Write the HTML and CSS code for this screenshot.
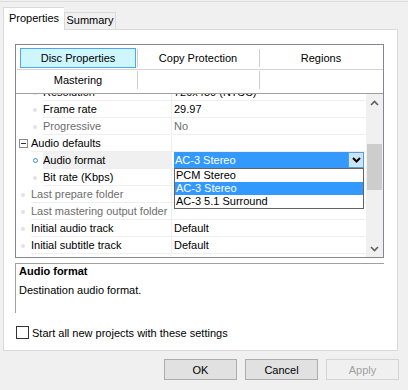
FILE: index.html
```html
<!DOCTYPE html>
<html lang="en">
<head>
    <meta charset="UTF-8">
    <title>Properties</title>
    <link rel="stylesheet" href="styles.css">
</head>
<body>
    <div class="window">
        <div class="tabs">
            <div class="tab active">Properties</div>
            <div class="tab">Summary</div>
        </div>

        <div class="page">
            <div class="grid">
                <div class="toolbar">
                    <div class="tb-row">
                        <div class="tb-cell"><span class="tb-btn pressed">Disc Properties</span></div>
                        <span class="tb-sep"></span>
                        <div class="tb-cell"><span class="tb-btn">Copy Protection</span></div>
                        <span class="tb-sep"></span>
                        <div class="tb-cell"><span class="tb-btn">Regions</span></div>
                    </div>
                    <div class="tb-line"></div>
                    <div class="tb-row">
                        <div class="tb-cell"><span class="tb-btn">Mastering</span></div>
                        <span class="tb-sep"></span>
                        <div class="tb-cell"></div>
                        <span class="tb-sep"></span>
                        <div class="tb-cell"></div>
                    </div>
                </div>

                <div class="grid-body">
                    <div class="rows">
                        <div class="row d2 first">
                            <span class="gutter"><i class="dot"></i></span>
                            <div class="cells"><span class="name">Resolution</span><span class="value">720x480 (NTSC)</span></div>
                        </div>
                        <div class="row d2">
                            <span class="gutter"><i class="dot"></i></span>
                            <div class="cells"><span class="name">Frame rate</span><span class="value">29.97</span></div>
                        </div>
                        <div class="row d2 disabled">
                            <span class="gutter"><i class="dot"></i></span>
                            <div class="cells"><span class="name">Progressive</span><span class="value">No</span></div>
                        </div>
                        <div class="row cat">
                            <span class="gutter"><i class="toggle"></i></span>
                            <div class="cells"><span class="name">Audio defaults</span><span class="value"></span></div>
                        </div>
                        <div class="row d2 selected">
                            <span class="gutter"><i class="dot ring"></i></span>
                            <div class="cells">
                                <span class="name">Audio format</span>
                                <span class="value">
                                    <span class="combo">
                                        <span class="combo-text">AC-3 Stereo</span>
                                        <span class="combo-btn">
                                            <svg width="9" height="6" viewBox="0 0 9 6"><path d="M1 1 L4.5 4.5 L8 1" fill="none" stroke="#000" stroke-width="2"/></svg>
                                        </span>
                                    </span>
                                    <span class="combo-list">
                                        <span class="opt">PCM Stereo</span>
                                        <span class="opt current">AC-3 Stereo</span>
                                        <span class="opt">AC-3 5.1 Surround</span>
                                    </span>
                                </span>
                            </div>
                        </div>
                        <div class="row d2">
                            <span class="gutter"><i class="dot"></i></span>
                            <div class="cells"><span class="name">Bit rate (Kbps)</span><span class="value"></span></div>
                        </div>
                        <div class="row d1 disabled">
                            <span class="gutter"><i class="dot"></i></span>
                            <div class="cells"><span class="name">Last prepare folder</span><span class="value"></span></div>
                        </div>
                        <div class="row d1 disabled">
                            <span class="gutter"><i class="dot"></i></span>
                            <div class="cells"><span class="name">Last mastering output folder</span><span class="value"></span></div>
                        </div>
                        <div class="row d1">
                            <span class="gutter"><i class="dot"></i></span>
                            <div class="cells"><span class="name">Initial audio track</span><span class="value">Default</span></div>
                        </div>
                        <div class="row d1">
                            <span class="gutter"><i class="dot"></i></span>
                            <div class="cells"><span class="name">Initial subtitle track</span><span class="value">Default</span></div>
                        </div>
                    </div>
                    <div class="scrollbar">
                        <span class="sb-arrow">
                            <svg width="9" height="6" viewBox="0 0 9 6"><path d="M1 5 L4.5 1.5 L8 5" fill="none" stroke="#606060" stroke-width="1.6"/></svg>
                        </span>
                        <span class="sb-track"><span class="sb-thumb"></span></span>
                        <span class="sb-arrow">
                            <svg width="9" height="6" viewBox="0 0 9 6"><path d="M1 1 L4.5 4.5 L8 1" fill="none" stroke="#606060" stroke-width="1.6"/></svg>
                        </span>
                    </div>
                </div>
            </div>

            <div class="desc">
                <div class="desc-title">Audio format</div>
                <div class="desc-text">Destination audio format.</div>
            </div>

            <label class="check"><span class="box"></span>Start all new projects with these settings</label>
        </div>

        <div class="buttons">
            <button class="btn">OK</button>
            <button class="btn">Cancel</button>
            <button class="btn" disabled>Apply</button>
        </div>
    </div>
</body>
</html>
```

FILE: styles.css
```css
body, html {
    margin: 0; padding: 0; width: 100%; height: 100%; overflow: hidden;
    background: #f0f0f0; color: #000;
    font-family: 'Liberation Sans', Arial, sans-serif; font-size: 11px;
}
.window {
    margin-top: 1px; border-top: 1px solid #dcdcdc;
    height: 388px; display: flex; flex-direction: column;
}

/* tabs */
.tabs {
    display: flex; align-items: flex-end; height: 27px; padding-left: 3px;
}
.tab {
    box-sizing: border-box; width: 52px; height: 17px; line-height: 15px; text-align: center;
    background: #f0f0f0; border: 1px solid #d9d9d9; border-bottom: none;
}
.tab.active {
    position: relative; z-index: 1; width: 61px; height: 23px; line-height: 21px;
    background: #fff; margin-bottom: -1px; border-right: none;
}
.page {
    box-sizing: border-box; height: 322px; margin: 0 10px 0 3px;
    background: #fff; border: 1px solid #d9d9d9;
    padding: 14px 13px 0 11px;
}

/* property grid */
.grid {
    border: 1px solid #828790; height: 212px; display: flex; flex-direction: column;
}
.toolbar {
    box-sizing: border-box; height: 49px; padding-top: 3px;
    border-bottom: 1px solid #a0a0a0;
}
.tb-row {
    display: grid; grid-template-columns: 117px 1px 121px 1px 1fr;
    align-items: center; height: 20px; padding-left: 4px;
}
.tb-cell { height: 20px; display: flex; }
.tb-btn {
    flex: 1; box-sizing: border-box; height: 20px; line-height: 18px; text-align: center;
    border: 1px solid transparent; margin-right: 1px;
}
.tb-btn.pressed { background: #cdf6ff; border-color: #4ea6f2; }
.tb-sep { height: 18px; background: #cfcfcf; }
.tb-line { height: 1px; background: #d4d4d4; margin: 1px 0 0 1px; }

.grid-body { flex: 1; display: flex; overflow: hidden; }
.rows { flex: 1; overflow: hidden; }
.row { display: flex; height: 17px; }
.row.first { margin-top: -10px; }
.gutter { flex: none; display: flex; align-items: center; width: 15px; }
.d2 .gutter { width: 27px; }
.dot {
    width: 4px; height: 4px; border-radius: 50%; background: #e2e2e2; margin-left: 5px;
}
.d2 .dot { margin-left: 17px; }
.dot.ring {
    box-sizing: border-box; width: 5px; height: 5px; background: none; border: 1px solid #3a8fe0;
}
.toggle {
    box-sizing: border-box; width: 9px; height: 9px; margin-left: 3px;
    border: 1px solid #8a8a8a; position: relative;
}
.toggle::after {
    content: ''; position: absolute; left: 1px; top: 3px; width: 5px; height: 1px; background: #333;
}
.cells { flex: 1; display: flex; border-bottom: 1px solid #efefef; }
.name {
    flex: 1; line-height: 16px; white-space: nowrap; overflow: hidden;
    border-right: 1px solid #efefef;
}
.value {
    width: 192px; flex: none; padding-left: 2px; line-height: 16px; white-space: nowrap;
    position: relative;
}
.disabled .name, .disabled .value { color: #6d6d6d; }
.selected .name { background: #f0f0f0; }

.combo {
    position: absolute; left: 2px; top: 0; width: 190px; height: 16px; display: flex; z-index: 2;
}
.combo-text {
    flex: 1; background: #3399ff; color: #fff; padding-left: 1px; line-height: 16px;
}
.combo-btn {
    box-sizing: border-box; width: 16px; height: 16px; background: #cce4f7;
    border: 1px solid #569de5; display: flex; align-items: center; justify-content: center;
}
.combo-list {
    position: absolute; left: 2px; top: 16px; width: 190px; box-sizing: border-box; z-index: 2;
    background: #fff; border: 1px solid #646464; display: flex; flex-direction: column;
}
.opt { height: 13px; line-height: 13px; padding-left: 1px; }
.opt.current { background: #3399ff; color: #fff; }

.scrollbar { width: 17px; flex: none; background: #f0f0f0; display: flex; flex-direction: column; }
.sb-arrow { height: 17px; display: flex; align-items: center; justify-content: center; }
.sb-track { flex: 1; }
.sb-thumb { display: block; height: 46px; margin: 33px 1px 0 1px; background: #cdcdcd; }

/* description */
.desc {
    margin-top: 5px; height: 50px; box-sizing: border-box;
    border-top: 1px solid #a0a0a0; border-left: 1px solid #a0a0a0;
    padding: 0 3px;
}
.desc-title { font-weight: bold; line-height: 15px; }
.desc-text { line-height: 15px; margin-top: 4px; }

.check { display: flex; align-items: center; margin-top: 13px; height: 13px; }
.check .box {
    box-sizing: border-box; width: 13px; height: 13px; margin: 0 3px 0 1px;
    border: 1px solid #333; background: #fff;
}

/* dialog buttons */
.buttons { display: flex; justify-content: flex-end; gap: 8px; padding: 8px 9px 0 0; }
.btn {
    width: 73px; height: 21px; padding: 0; font: inherit; color: #000;
    background: #e1e1e1; border: 1px solid #adadad;
}
.btn:disabled { color: #a0a0a0; background: #f0f0f0; border-color: #d4d4d4; }
```
